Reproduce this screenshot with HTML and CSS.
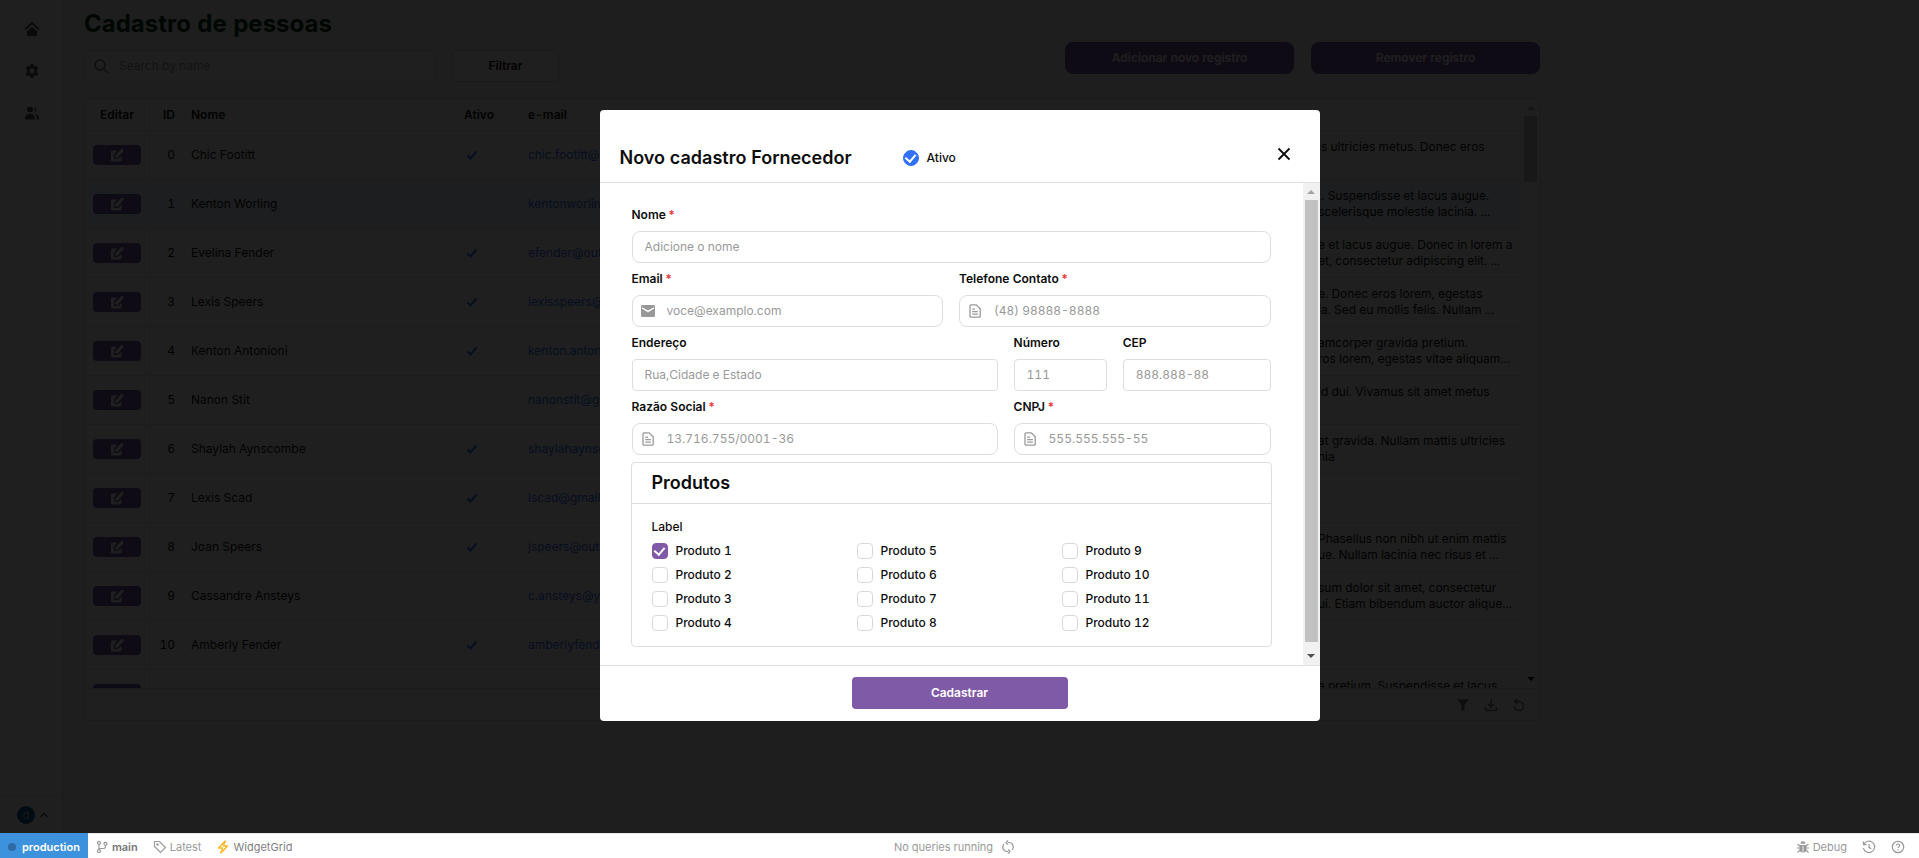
FILE: index.html
```html
<!DOCTYPE html>
<html lang="pt-BR">
<head>
<meta charset="utf-8">
<title>Cadastro de pessoas</title>
<link rel="stylesheet" href="styles.css">
</head>
<body>
<svg class="sprite" aria-hidden="true">
  <symbol id="i-edit" viewBox="0 0 16 16"><path d="M8 3.500H3.500A1.500 1.500 0 0 0 2 5v8a1.500 1.500 0 0 0 1.500 1.500H11A1.500 1.500 0 0 0 12.500 13V9L9.200 12H5V7.500z" fill="currentColor"/><path d="M7.600 9.500l5.400-6.100" stroke="currentColor" stroke-width="3" stroke-linecap="round"/></symbol>
  <symbol id="i-check" viewBox="0 0 16 16"><path d="M3.500 8.500l3 3 6-7" fill="none" stroke="currentColor" stroke-width="2"/></symbol>
  <symbol id="i-doc" viewBox="0 0 16 16"><path d="M4 1.800h5.200l4 4v7.400a1 1 0 0 1-1 1H4a1 1 0 0 1-1-1V2.800a1 1 0 0 1 1-1zM5.200 6.200H8M5.200 8.700h5.700M5.200 11.200h5.700" fill="none" stroke="currentColor" stroke-width="1.300"/></symbol>
</svg>

<div class="stage">
  <nav class="sidebar">
    <div class="sidebar-links">
      <a href="#" aria-label="Início"><svg viewBox="0 0 16 16"><path d="M1.500 8L8 2l6.500 6" fill="none" stroke="currentColor" stroke-width="1.800" stroke-linecap="round"/><path d="M8 5.800l5 4.600V15H3v-4.600z" fill="currentColor"/></svg></a>
      <a href="#" aria-label="Configurações"><svg viewBox="0 0 16 16"><path fill="currentColor" fill-rule="evenodd" d="M6.700 1h2.600l.5 1.900 1.200.7 1.900-.5 1.500 2.400L13 7v2l1.400 1.500-1.500 2.400-1.900-.5-1.200.7L9.300 15H6.700l-.5-1.900-1.200-.7-1.900.5-1.500-2.400L3 9V7L1.600 5.500l1.500-2.400 1.900.5 1.200-.7zM8 5.600a2.400 2.400 0 1 0 0 4.800 2.400 2.400 0 0 0 0-4.800z"/></svg></a>
      <a href="#" aria-label="Pessoas"><svg viewBox="0 0 16 16"><circle cx="6" cy="4.500" r="3" fill="currentColor"/><path d="M.8 14.500C.8 11 2.500 9 6 9s5.200 2 5.200 5.500zM10 1.600a3 3 0 0 1 0 5.800 5 5 0 0 0 0-5.800zM10.800 9c3 0 4.400 2 4.400 5.500h-2.400c0-2.500-.6-4.200-2-5.500z" fill="currentColor"/></svg></a>
    </div>
    <button class="profile" aria-label="Perfil"><span class="avatar">d</span><svg viewBox="0 0 10 10"><path d="M1.500 7L5 3.500 8.500 7" fill="none" stroke="currentColor" stroke-width="1.400"/></svg></button>
  </nav>

  <main class="page">
    <header class="page-head">
      <div class="page-left">
        <h1>Cadastro de pessoas</h1>
        <div class="filters">
          <label class="search"><svg viewBox="0 0 16 16"><circle cx="7" cy="7" r="5" fill="none" stroke="currentColor" stroke-width="1.600"/><path d="M10.700 10.700L15 15" stroke="currentColor" stroke-width="1.600"/></svg><input type="text" placeholder="Search by name" aria-label="Search by name"></label>
          <button class="btn-outline">Filtrar</button>
        </div>
      </div>
      <div class="page-actions">
        <button class="btn-primary">Adicionar novo registro</button>
        <button class="btn-primary">Remover registro</button>
      </div>
    </header>

    <section class="grid">
      <div class="grid-view">
        <div class="grid-clip">
        <table>
          <colgroup><col class="c-edit"><col class="c-id"><col class="c-name"><col class="c-active"><col class="c-mail"><col></colgroup>
          <thead><tr><th class="edit">Editar</th><th class="num">ID</th><th>Nome</th><th>Ativo</th><th>e-mail</th><th></th></tr></thead>
          <tbody>
            <tr><td class="edit"><button aria-label="Editar"><svg><use href="#i-edit"/></svg></button></td><td class="num">0</td><td>Chic Footitt</td><td><svg><use href="#i-check"/></svg></td><td><a href="#">chic.footitt@yahoo.com</a></td><td class="note">is ultricies metus. Donec eros</td></tr>
            <tr class="hover"><td class="edit"><button aria-label="Editar"><svg><use href="#i-edit"/></svg></button></td><td class="num">1</td><td>Kenton Worling</td><td></td><td><a href="#">kentonworling@icloud.com</a></td><td class="note">.. Suspendisse et lacus augue.<br>scelerisque molestie lacinia. ...</td></tr>
            <tr><td class="edit"><button aria-label="Editar"><svg><use href="#i-edit"/></svg></button></td><td class="num">2</td><td>Evelina Fender</td><td><svg><use href="#i-check"/></svg></td><td><a href="#">efender@outlook.com</a></td><td class="note">e et lacus augue. Donec in lorem a<br>et, consectetur adipiscing elit. ...</td></tr>
            <tr><td class="edit"><button aria-label="Editar"><svg><use href="#i-edit"/></svg></button></td><td class="num">3</td><td>Lexis Speers</td><td><svg><use href="#i-check"/></svg></td><td><a href="#">lexisspeers@icloud.com</a></td><td class="note">e. Donec eros lorem, egestas<br>ia. Sed eu mollis felis. Nullam ...</td></tr>
            <tr><td class="edit"><button aria-label="Editar"><svg><use href="#i-edit"/></svg></button></td><td class="num">4</td><td>Kenton Antonioni</td><td><svg><use href="#i-check"/></svg></td><td><a href="#">kenton.antonioni@yahoo.com</a></td><td class="note">amcorper gravida pretium.<br>ros lorem, egestas vitae aliquam...</td></tr>
            <tr><td class="edit"><button aria-label="Editar"><svg><use href="#i-edit"/></svg></button></td><td class="num">5</td><td>Nanon Stit</td><td></td><td><a href="#">nanonstit@gmail.com</a></td><td class="note">id dui. Vivamus sit amet metus</td></tr>
            <tr><td class="edit"><button aria-label="Editar"><svg><use href="#i-edit"/></svg></button></td><td class="num">6</td><td>Shaylah Aynscombe</td><td><svg><use href="#i-check"/></svg></td><td><a href="#">shaylahaynscombe@gmail.com</a></td><td class="note">at gravida. Nullam mattis ultricies<br>nia</td></tr>
            <tr><td class="edit"><button aria-label="Editar"><svg><use href="#i-edit"/></svg></button></td><td class="num">7</td><td>Lexis Scad</td><td><svg><use href="#i-check"/></svg></td><td><a href="#">lscad@gmail.com</a></td><td></td></tr>
            <tr><td class="edit"><button aria-label="Editar"><svg><use href="#i-edit"/></svg></button></td><td class="num">8</td><td>Joan Speers</td><td><svg><use href="#i-check"/></svg></td><td><a href="#">jspeers@outlook.com</a></td><td class="note">Phasellus non nibh ut enim mattis<br>ue. Nullam lacinia nec risus et ...</td></tr>
            <tr><td class="edit"><button aria-label="Editar"><svg><use href="#i-edit"/></svg></button></td><td class="num">9</td><td>Cassandre Ansteys</td><td></td><td><a href="#">c.ansteys@yahoo.com</a></td><td class="note">sum dolor sit amet, consectetur<br>ui. Etiam bibendum auctor alique...</td></tr>
            <tr><td class="edit"><button aria-label="Editar"><svg><use href="#i-edit"/></svg></button></td><td class="num">10</td><td>Amberly Fender</td><td><svg><use href="#i-check"/></svg></td><td><a href="#">amberlyfender@gmail.com</a></td><td></td></tr>
            <tr><td class="edit"><button aria-label="Editar"><svg><use href="#i-edit"/></svg></button></td><td class="num"></td><td></td><td></td><td></td><td class="note">a pretium. Suspendisse et lacus</td></tr>
          </tbody>
        </table>
        </div>
        <div class="scrollbar grid-scroll"><i class="up"></i><i class="thumb"></i><i class="down"></i></div>
      </div>
      <footer class="grid-foot">
        <button aria-label="Filtrar"><svg viewBox="0 0 16 16"><path d="M1.500 1.500h13L9.800 8v6.500H6.200V8z" fill="currentColor"/></svg></button>
        <button aria-label="Baixar"><svg viewBox="0 0 16 16" fill="none" stroke="currentColor" stroke-width="1.700"><path d="M8 1v9M4.800 7L8 10.200 11.200 7M1.800 10.500V13a1.200 1.200 0 0 0 1.200 1.200h10a1.200 1.200 0 0 0 1.200-1.200v-2.500"/></svg></button>
        <button aria-label="Atualizar"><svg viewBox="0 0 16 16" fill="none" stroke="currentColor" stroke-width="1.500"><path d="M3.500 4H8a5.200 5.200 0 1 1-5.200 5.200M6 1L3 4l3 3"/></svg></button>
      </footer>
    </section>
  </main>

  <div class="overlay">
    <form class="modal" role="dialog" aria-labelledby="modal-title">
      <header class="modal-head">
        <h2 id="modal-title">Novo cadastro Fornecedor</h2>
        <label class="check"><input class="round" type="checkbox" checked><span>Ativo</span></label>
        <button type="button" class="close" aria-label="Fechar"><svg viewBox="0 0 14 14"><path d="M1.500 1.500l11 11M12.500 1.500l-11 11" stroke="currentColor" stroke-width="1.800"/></svg></button>
      </header>
      <div class="modal-body">
        <div class="fields">
          <div class="field w12"><label for="nome">Nome<b>*</b></label><div class="box soft"><input id="nome" type="text" placeholder="Adicione o nome"></div></div>
          <div class="field w6"><label for="email">Email<b>*</b></label><div class="box soft"><svg viewBox="0 0 16 16"><path fill-rule="evenodd" d="M2.500 2h11A1.500 1.500 0 0 1 15 3.500v9a1.500 1.500 0 0 1-1.500 1.500h-11A1.500 1.500 0 0 1 1 12.500v-9A1.500 1.500 0 0 1 2.500 2zM2 4.200v1.600l6 3.400 6-3.400V4.200L8 7.600z" fill="currentColor"/></svg><input id="email" type="text" placeholder="voce@examplo.com"></div></div>
          <div class="field w6"><label for="tel">Telefone Contato<b>*</b></label><div class="box soft"><svg><use href="#i-doc"/></svg><input id="tel" type="text" placeholder="(48) 98888-8888"></div></div>
          <div class="field w7"><label for="end">Endereço</label><div class="box"><input id="end" type="text" placeholder="Rua,Cidade e Estado"></div></div>
          <div class="field w2"><label for="num">Número</label><div class="box"><input id="num" type="text" placeholder="111"></div></div>
          <div class="field w3"><label for="cep">CEP</label><div class="box"><input id="cep" type="text" placeholder="888.888-88"></div></div>
          <div class="field w7"><label for="razao">Razão Social<b>*</b></label><div class="box soft"><svg><use href="#i-doc"/></svg><input id="razao" type="text" placeholder="13.716.755/0001-36"></div></div>
          <div class="field w5"><label for="cnpj">CNPJ<b>*</b></label><div class="box soft"><svg><use href="#i-doc"/></svg><input id="cnpj" type="text" placeholder="555.555.555-55"></div></div>
          <section class="card w12">
            <h3>Produtos</h3>
            <fieldset>
              <legend>Label</legend>
              <div class="options">
                <label class="check"><input type="checkbox" checked><span>Produto 1</span></label>
                <label class="check"><input type="checkbox"><span>Produto 2</span></label>
                <label class="check"><input type="checkbox"><span>Produto 3</span></label>
                <label class="check"><input type="checkbox"><span>Produto 4</span></label>
                <label class="check"><input type="checkbox"><span>Produto 5</span></label>
                <label class="check"><input type="checkbox"><span>Produto 6</span></label>
                <label class="check"><input type="checkbox"><span>Produto 7</span></label>
                <label class="check"><input type="checkbox"><span>Produto 8</span></label>
                <label class="check"><input type="checkbox"><span>Produto 9</span></label>
                <label class="check"><input type="checkbox"><span>Produto 10</span></label>
                <label class="check"><input type="checkbox"><span>Produto 11</span></label>
                <label class="check"><input type="checkbox"><span>Produto 12</span></label>
              </div>
            </fieldset>
          </section>
        </div>
        <div class="scrollbar modal-scroll"><i class="up"></i><i class="thumb"></i><i class="down"></i></div>
      </div>
      <footer class="modal-foot"><button type="button" class="btn-submit">Cadastrar</button></footer>
    </form>
  </div>
</div>

<footer class="status">
  <div class="status-side">
    <button class="env"><i></i>production</button>
    <button class="strong"><svg viewBox="0 0 14 14" fill="none" stroke="currentColor" stroke-width="1.200"><circle cx="4" cy="2.800" r="1.500"/><circle cx="4" cy="11.200" r="1.500"/><circle cx="10.500" cy="3.800" r="1.500"/><path d="M4 4.300v5.400M4 8.500h4a2.500 2.500 0 0 0 2.500-3.200"/></svg>main</button>
    <button><svg viewBox="0 0 14 14" fill="none" stroke="currentColor" stroke-width="1.200"><path d="M1.500 2v4.500l6 6 5-5-6-6H2a.5.5 0 0 0-.5.500z"/><circle cx="4.500" cy="4.500" r=".6"/></svg>Latest</button>
    <button class="dark"><svg class="bolt" viewBox="0 0 14 14" fill="none" stroke="currentColor" stroke-width="1.400" stroke-linejoin="round"><path d="M9.200 1L2.500 8h4L4.800 13l6.700-7h-4z"/></svg>WidgetGrid</button>
  </div>
  <div class="status-mid">No queries running<svg viewBox="0 0 14 14" fill="none" stroke="currentColor" stroke-width="1.200"><path d="M7 2.500h1A4.300 4.300 0 0 1 11 9.800M7 .5l-2 2 2 2M7 11.500H6A4.300 4.300 0 0 1 3 4.200M7 13.500l2-2-2-2"/></svg></div>
  <div class="status-end">
    <button><svg viewBox="0 0 14 14"><path d="M4.500 3.800a2.500 2.500 0 0 1 5 0zM3.500 5h7v4a3.500 3.500 0 0 1-7 0z" fill="currentColor"/><path d="M1.500 4l2.500 2M12.500 4L10 6M1 8h12M1.500 12.500L4 10M12.500 12.500L10 10" stroke="currentColor" stroke-width="1.200"/><path d="M7 6v6" stroke="#fff" stroke-width=".8"/></svg>Debug</button>
    <button aria-label="Histórico"><svg viewBox="0 0 14 14" fill="none" stroke="currentColor" stroke-width="1.200"><path d="M1.800 4.500a5.700 5.700 0 1 1-.4 3.500M1.500 1.500v3.200h3.200M7 4v3.300l2.300 1.500"/></svg></button>
    <button aria-label="Ajuda"><svg viewBox="0 0 14 14" fill="none" stroke="currentColor" stroke-width="1.200"><circle cx="7" cy="7" r="5.700"/><path d="M5.400 5.600a1.600 1.600 0 1 1 2.400 1.400c-.6.300-.8.600-.8 1.100M7 9.300v1.200"/></svg></button>
  </div>
</footer>
</body>
</html>
```

FILE: styles.css
```css
* { box-sizing: border-box; }

body {
  margin: 0;
  height: 100vh;
  display: flex;
  flex-direction: column;
  overflow: hidden;
  font: 400 12px/16px Inter, "Liberation Sans", sans-serif;
  font-variant-numeric: tabular-nums;
  color: #0d0d0d;
}

h1, h2, h3 { margin: 0; font-weight: 600; }
button, input { font: inherit; font-variant-numeric: inherit; color: inherit; }
button { border: 0; padding: 0; background: none; cursor: pointer; }
input[type="text"] { flex: 1; min-width: 0; width: 100%; border: 0; padding: 0; background: none; outline: none; }
input::placeholder { color: #999; opacity: 1; }
a { color: inherit; text-decoration: none; }
svg { width: 16px; height: 16px; display: block; flex: none; }
.sprite { position: absolute; width: 0; height: 0; }

.stage { position: relative; flex: 1; min-height: 0; display: flex; overflow: hidden; background: #f6f6f6; }

/* Sidebar */
.sidebar { width: 64px; flex: none; display: flex; flex-direction: column; justify-content: space-between; background: #fff; border-right: 1px solid #e2e2e2; color: #555; }
.sidebar-links { display: flex; flex-direction: column; align-items: center; gap: 26px; padding-top: 21px; }
.profile { height: 37px; display: flex; align-items: center; gap: 4px; padding-left: 17px; border-top: 1px solid #e2e2e2; }
.profile svg { width: 10px; height: 10px; }
.avatar { width: 18px; height: 18px; border-radius: 50%; background: #0a5fa5; color: #ccc; font-size: 11px; line-height: 18px; }

/* Page */
.page { flex: 1; min-width: 0; padding: 8px 20px; }
.page-head { display: flex; justify-content: space-between; max-width: 1456px; }
.page-left { display: flex; flex-direction: column; gap: 10px; }
h1 { font-size: 24px; line-height: 32px; font-weight: 700; color: #00381c; }
.filters { display: flex; gap: 16px; }
.search { width: 352px; height: 32px; display: flex; align-items: center; gap: 10px; padding: 0 8px; background: #fff; border: 1px solid #d8d8d8; border-radius: 4px; color: #777; }
.btn-outline { width: 107px; height: 32px; border: 1px solid #d0d0d0; border-radius: 4px; background: #fff; font-weight: 600; }
.page-actions { display: flex; gap: 17px; padding-top: 34px; }
.btn-primary { width: 229px; height: 32px; border-radius: 8px; background: #7f5aa7; color: #fff; font-weight: 600; }

/* Data grid */
.grid { max-width: 1456px; margin-top: 16px; background: #fff; border: 1px solid #dcdcdc; border-radius: 4px; }
.grid-view { height: 589px; display: flex; }
.grid-clip { flex: 1; min-width: 0; overflow: hidden; }
table { width: 100%; table-layout: fixed; border-collapse: separate; border-spacing: 0; }
.c-edit { width: 65px; }
.c-id { width: 33px; }
.c-name { width: 273px; }
.c-active { width: 64px; }
.c-mail { width: 790px; }
th, td { padding: 0 8px; text-align: left; border-bottom: 1px solid #e0e0e0; white-space: nowrap; }
th { height: 32px; font-weight: 600; }
td { height: 49px; }
th.num, td.num { padding-left: 0; text-align: right; }
th.edit, td.edit { text-align: center; border-right: 1px solid #e0e0e0; }
td.note { padding-top: 8px; vertical-align: top; }
td.edit button { width: 48px; height: 20px; display: flex; align-items: center; justify-content: center; border-radius: 4px; background: #7f5aa7; color: #fff; }
td svg, td a { color: #3170f9; }
td.edit svg { color: #fff; }
.hover td { background: #eef4fb; }
.grid-foot { height: 32px; display: flex; align-items: center; justify-content: flex-end; gap: 12px; padding-right: 12px; border-top: 1px solid #dcdcdc; color: #777; }
.grid-foot svg { width: 16px; height: 14px; }

/* Scrollbars */
.scrollbar { width: 17px; flex: none; display: flex; flex-direction: column; align-items: center; background: #f1f1f1; }
.scrollbar .up, .scrollbar .down { border: 4px solid transparent; }
.scrollbar .up { border-top: 0; border-bottom-color: #a3a3a3; margin: 7px 0 6px; }
.scrollbar .down { border-bottom: 0; border-top-color: #505050; margin: auto 0 7px; }
.scrollbar .thumb { width: 13px; background: #c1c1c1; }
.grid-scroll { background: #fafafa; }
.grid-scroll .thumb { height: 66px; }
.grid-scroll .down { border-top-color: #111; }
.modal-scroll .thumb { height: 442px; }

/* Modal */
.overlay { position: absolute; inset: 0; display: flex; align-items: center; justify-content: center; padding-bottom: 2px; background: rgba(0, 0, 0, 0.88); }
.modal { width: 720px; max-width: 100%; background: #fff; border-radius: 4px; overflow: hidden; }
.modal-head { display: flex; align-items: center; padding: 36px 28px 12px 20px; border-bottom: 1px solid #e0e0e0; }
h2, h3 { font-size: 18px; line-height: 24px; }
.modal-head .check { margin-left: 51px; }
.close { margin: 0 0 8px auto; padding: 0 1px; }
.close svg { width: 14px; height: 14px; }
.modal-body { display: flex; }
.fields { flex: 1; display: grid; grid-template-columns: repeat(12, 1fr); gap: 8px 16px; padding: 24px 32px 19px; }
.w12 { grid-column: span 12; }
.w7 { grid-column: span 7; }
.w6 { grid-column: span 6; }
.w5 { grid-column: span 5; }
.w3 { grid-column: span 3; }
.w2 { grid-column: span 2; }
.field { min-width: 0; display: flex; flex-direction: column; gap: 8px; }
.field label { font-weight: 600; }
.field b { margin-left: 2px; font-weight: 600; color: #e5383b; }
.box { height: 32px; display: flex; align-items: center; gap: 11px; padding: 0 12px; border: 1px solid #dedede; border-radius: 4px; }
.box.soft { border-radius: 8px; }
.box svg { color: #999; margin-left: -5px; }

.card { margin: -1px; border: 1px solid #dedede; border-radius: 4px; }
h3 { padding: 8px 20px; border-bottom: 1px solid #dedede; }
fieldset { margin: 0; border: 0; padding: 15px 20px; }
legend { float: left; width: 100%; padding: 0; margin-bottom: 8px; font-weight: 500; }
.options { clear: both; display: grid; grid-auto-flow: column; grid-template: repeat(4, 16px) / repeat(3, 1fr); gap: 8px 16px; }
.check { display: flex; align-items: center; gap: 8px; font-weight: 500; }
.check input { appearance: none; width: 16px; height: 16px; margin: 0; display: grid; place-items: center; border: 1px solid #d9d9d9; border-radius: 4px; background: #fff; }
.check input.round { border-radius: 50%; }
.check input:checked { border-color: #7f5aa7; background: #7f5aa7; }
.check input.round:checked { border-color: #3170f9; background: #3170f9; }
.check input:checked::before { content: ""; width: 5px; height: 8px; margin-bottom: 2px; border: solid #fff; border-width: 0 2px 2px 0; transform: rotate(40deg); }
.modal-foot { display: flex; justify-content: center; padding: 11px 0 12px; border-top: 1px solid #e0e0e0; }
.btn-submit { width: 216px; height: 32px; border-radius: 4px; background: #7f5aa7; color: #fff; font-weight: 600; }

/* Status bar */
.status { height: 25px; flex: none; display: grid; grid-template-columns: 1fr auto 1fr; padding-top: 1px; border-top: 1px solid #e8e8e8; background: #fff; color: #999; font-size: 11px; }
.status svg { width: 14px; height: 14px; }
.status button, .status-mid { display: flex; align-items: center; gap: 3px; }
.status .status-mid { gap: 8px; padding-right: 10px; }
.status-side, .status-end { display: flex; align-items: center; gap: 15px; }
.status-end { justify-content: flex-end; padding-right: 14px; }
.status .env { height: 25px; align-self: flex-start; gap: 6px; margin: -2px -8px 0 0; padding: 2px 8px 0; background: #3c92dc; color: #fff; font-weight: 600; }
.env i { width: 8px; height: 8px; border-radius: 50%; background: #2c6ba5; }
.strong { color: #777; font-weight: 600; }
.strong svg { color: #999; }
.dark { color: #808080; }
.status .bolt { color: #f9b824; }
```
